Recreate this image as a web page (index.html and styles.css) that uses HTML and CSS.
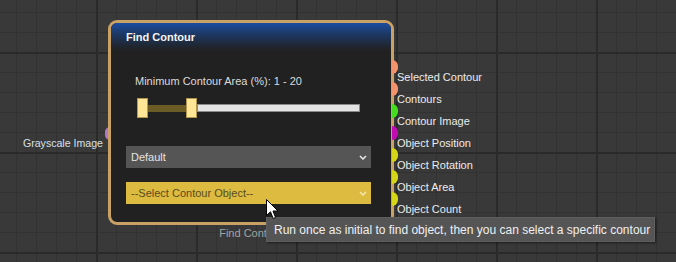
FILE: index.html
```html
<!DOCTYPE html>
<html lang="en">

<head>
    <meta charset="UTF-8">
    <title>Find Contour</title>
    <link rel="stylesheet" href="styles.css">
</head>

<body>
    <div class="canvas">
        <!-- input side -->
        <div class="in-port"></div>
        <div class="in-label">Grayscale Image</div>

        <!-- node -->
        <div class="node-wrap">
            <div class="node">
                <div class="node-head">Find Contour</div>
                <div class="node-body">
                    <div class="param-label">Minimum Contour Area (%): 1 - 20</div>
                    <div class="slider">
                        <div class="handle"></div>
                        <div class="fill"></div>
                        <div class="handle"></div>
                        <div class="track"></div>
                    </div>
                    <div class="select select-gray">
                        <span>Default</span>
                        <svg width="8" height="5" viewBox="0 0 8 5"><polyline points="1,1 4,4 7,1" fill="none" stroke="#e8e8e8" stroke-width="1.5"/></svg>
                    </div>
                    <div class="select select-yellow">
                        <span>--Select Contour Object--</span>
                        <svg width="8" height="5" viewBox="0 0 8 5"><polyline points="1,1 4,4 7,1" fill="none" stroke="#f4e6b0" stroke-width="1.5"/></svg>
                    </div>
                </div>
            </div>
            <div class="node-caption">Find Contour</div>
        </div>

        <!-- outputs -->
        <div class="outputs">
            <div class="out out-orange">Selected Contour</div>
            <div class="out out-orange">Contours</div>
            <div class="out out-green">Contour Image</div>
            <div class="out out-magenta">Object Position</div>
            <div class="out out-yellow">Object Rotation</div>
            <div class="out out-yellow">Object Area</div>
            <div class="out out-yellow">Object Count</div>
        </div>

        <div class="tooltip">Run once as initial to find object, then you can select a specific contour</div>

        <svg class="cursor" width="13" height="21" viewBox="0 0 13 21">
            <path d="M0.5,0.5 L0.5,16.5 L4.5,12.8 L7.2,19.5 L9.6,18.5 L7,12 L12,12 Z" fill="#fff" stroke="#000" stroke-width="1"/>
        </svg>
    </div>
</body>

</html>
```

FILE: styles.css
```css
* {
    box-sizing: border-box;
}

body {
    margin: 0;
    font-family: "Liberation Sans", Arial, sans-serif;
    font-size: 11px;
}

.canvas {
    position: relative;
    width: 676px;
    height: 262px;
    overflow: hidden;
    background:
        linear-gradient(90deg, #2a2a2a 2px, transparent 0) 96px 0 / 100px 100px,
        linear-gradient(180deg, #2a2a2a 2px, transparent 0) 0 52px / 100px 100px,
        linear-gradient(90deg, #323232 1px, transparent 0) 16px 0 / 20px 20px,
        linear-gradient(180deg, #323232 1px, transparent 0) 0 12px / 20px 20px,
        #393939;
}

/* node */
.node-wrap {
    position: absolute;
    left: 108px;
    top: 20px;
    width: 286px;
    display: flex;
    flex-direction: column;
    align-items: center;
}

.node {
    width: 286px;
    height: 205px;
    border: 3px solid #c9a165;
    border-radius: 9px;
    background: #212121;
    overflow: hidden;
}

.node-head {
    height: 27px;
    padding: 8px 0 0 15px;
    background: linear-gradient(#1b4da0, #1d3866 40%, #212121);
    color: #f4f4f4;
    font-weight: bold;
    font-size: 11px;
}

.node-body {
    display: flex;
    flex-direction: column;
    padding: 0 20px 0 15px;
}

.param-label {
    margin: 24px 0 0 9px;
    line-height: 14px;
    color: #dcdcdc;
}

.slider {
    display: flex;
    align-items: center;
    height: 20px;
    margin: 10px 0 0 11px;
    width: 223px;
}

.handle {
    width: 11px;
    height: 20px;
    background: #ffe596;
    border: 1px solid #b3974e;
}

.fill {
    width: 38px;
    height: 7px;
    background: #6b5b24;
}

.track {
    flex: 1;
    height: 8px;
    background: #e4e4e4;
    border: 1px solid #8a8a8a;
}

.select {
    display: flex;
    align-items: center;
    justify-content: space-between;
    width: 245px;
    height: 22px;
    padding: 0 4px 0 5px;
    font-size: 11px;
}

.select-gray {
    margin-top: 28px;
    background: #555555;
    color: #e4e4e4;
}

.select-yellow {
    margin-top: 14px;
    background: #dcbb40;
    color: #5a4b1e;
}

.node-caption {
    margin-top: 1px;
    color: #a4a4a4;
    line-height: 14px;
}

/* ports */
.in-port {
    position: absolute;
    left: 105px;
    top: 127px;
    width: 5px;
    height: 13px;
    border-radius: 7px 0 0 7px;
    background: #b476c6;
}

.in-label {
    position: absolute;
    left: 0;
    top: 136px;
    width: 103px;
    text-align: right;
    line-height: 14px;
    color: #d6e0ea;
    font-size: 10.6px;
}

.outputs {
    position: absolute;
    left: 397px;
    top: 66px;
    display: flex;
    flex-direction: column;
}

.out {
    position: relative;
    height: 22px;
    line-height: 22px;
    color: #ececec;
}

.out::before {
    content: "";
    position: absolute;
    left: -5px;
    top: -6px;
    width: 6px;
    height: 14px;
    border-radius: 0 7px 7px 0;
}

.out-orange::before {
    background: #f3936c;
}

.out-green::before {
    background: #45dc1e;
}

.out-magenta::before {
    background: #c00cb0;
}

.out-yellow::before {
    background: #d6d618;
}

/* overlays */
.tooltip {
    position: absolute;
    left: 266px;
    top: 217px;
    width: 389px;
    height: 25px;
    padding-left: 7px;
    line-height: 24px;
    background: #555555;
    border: 1px solid #5e5e5e;
    box-shadow: 1px 1px 2px rgba(0, 0, 0, 0.5);
    color: #f0f0f0;
    font-size: 12px;
    white-space: nowrap;
}

.cursor {
    position: absolute;
    left: 266px;
    top: 199px;
}
```
